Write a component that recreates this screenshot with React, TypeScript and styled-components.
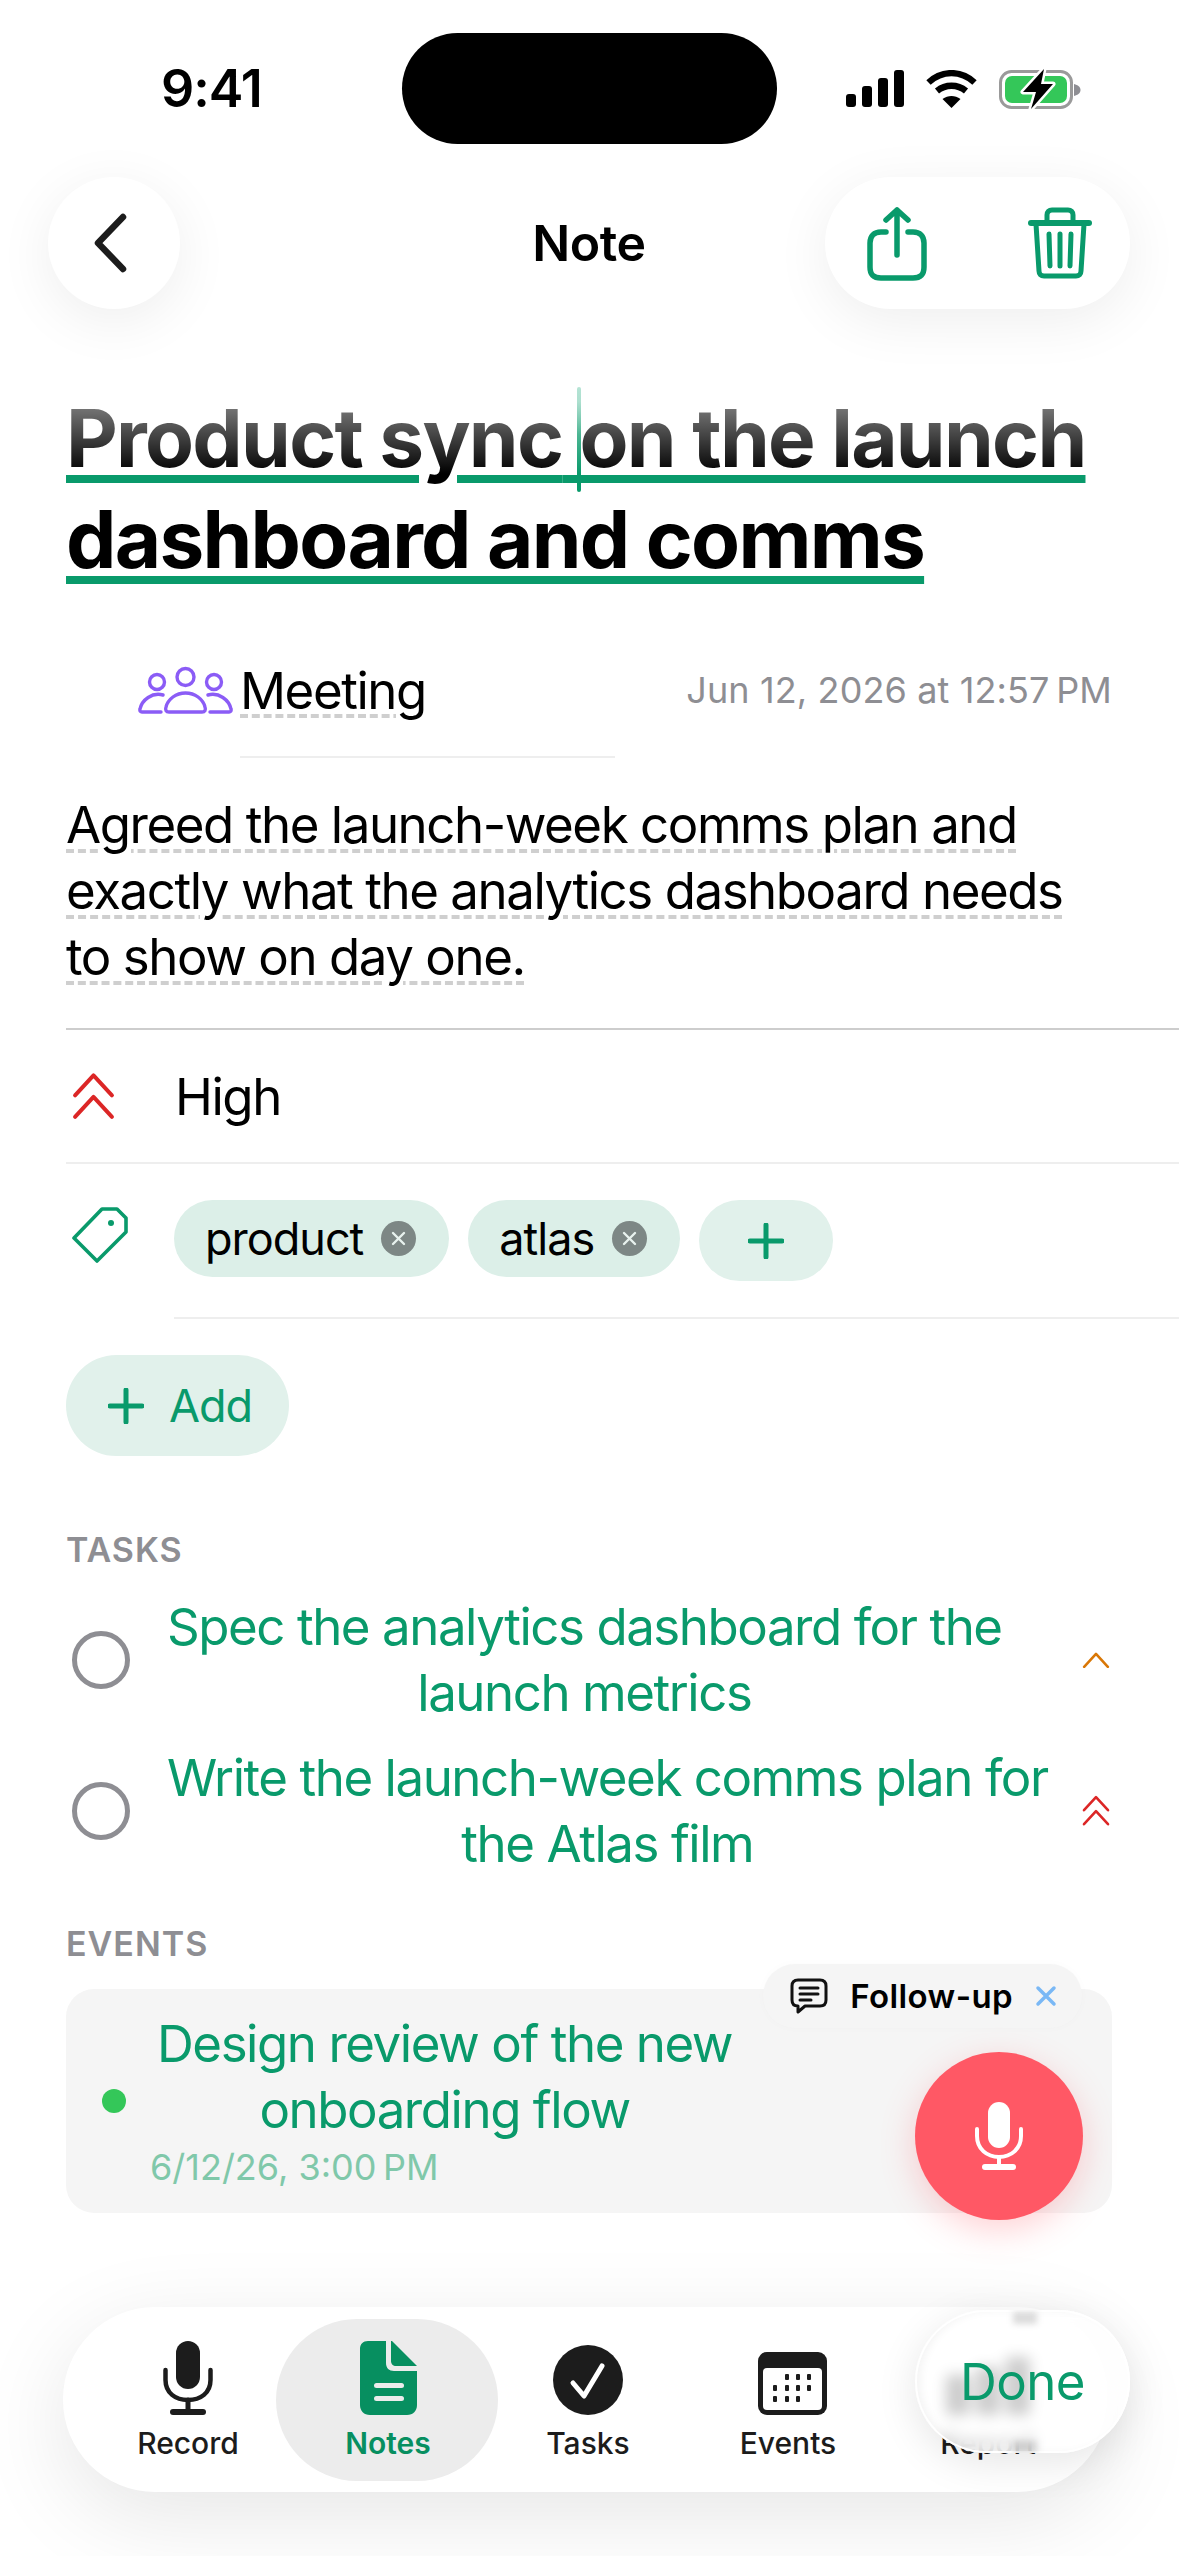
import React from 'react';
import styled, { createGlobalStyle } from 'styled-components';

const GREEN = '#099a6b';
const TAB_GREEN = '#078f60';
const INK = '#1c1c1c';

const GlobalStyle = createGlobalStyle`
  html, body {
    margin: 0;
    padding: 0;
    background: #fff;
  }
  body {
    font-family: Inter, "Noto Sans", sans-serif;
    color: #000;
    -webkit-font-smoothing: antialiased;
  }
`;

const Page = styled.div`
  position: relative;
  width: 1179px;
  height: 2556px;
  overflow: hidden;
  background: #fff;
`;

const StatusBar = styled.div`
  display: grid;
  grid-template-columns: 402px 375px 1fr;
  align-items: center;
  padding: 33px 0;
  height: 111px;
`;

const Time = styled.div`
  padding-left: 161px;
  font-size: 52px;
  font-weight: 600;
  letter-spacing: -1px;
`;

const Island = styled.div`
  height: 111px;
  border-radius: 56px;
  background: #000;
`;

const StatusIcons = styled.div`
  display: flex;
  align-items: center;
  gap: 22px;
  padding-left: 69px;
`;

const Header = styled.div`
  position: relative;
  z-index: 3;
  display: grid;
  grid-template-columns: 1fr auto 1fr;
  align-items: center;
  margin: 0 49px 0 48px;
  height: 132px;
`;

const BackButton = styled.div`
  display: flex;
  align-items: center;
  justify-content: center;
  width: 132px;
  height: 132px;
  border-radius: 50%;
  background: #fff;
  box-shadow: 0 12px 56px rgba(0, 0, 0, 0.07);

  svg {
    margin-right: 8px;
  }
`;

const HeaderTitle = styled.div`
  font-size: 50px;
  font-weight: 600;
  letter-spacing: -0.4px;
`;

const ActionPill = styled.div`
  justify-self: end;
  display: flex;
  align-items: center;
  gap: 101px;
  padding: 0 38px 0 42px;
  height: 132px;
  border-radius: 66px;
  background: #fff;
  box-shadow: 0 12px 56px rgba(0, 0, 0, 0.07);
`;

const TitleFade = styled.div`
  position: absolute;
  z-index: 2;
  left: 0;
  right: 0;
  top: 309px;
  height: 165px;
  pointer-events: none;
  background: linear-gradient(
    to bottom,
    rgba(255, 255, 255, 0) 0%,
    rgba(255, 255, 255, 0.5) 56%,
    rgba(255, 255, 255, 0) 100%
  );
`;

const Content = styled.div`
  padding-left: 66px;
`;

const Title = styled.h1`
  margin: 78px 67px 0 0;
  font-size: 80px;
  line-height: 101px;
  font-weight: 700;
  letter-spacing: -1.72px;
  white-space: nowrap;
  text-decoration: underline;
  text-decoration-color: ${GREEN};
  text-decoration-thickness: 8px;
  text-underline-offset: 8px;
`;

const CaretAnchor = styled.span`
  position: relative;
`;

const Caret = styled.span`
  position: absolute;
  left: -3px;
  top: -2px;
  width: 4px;
  height: 105px;
  border-radius: 2px;
  background: linear-gradient(to bottom, #7fd0b6, ${GREEN} 45%);
`;

const MetaRow = styled.div`
  display: flex;
  align-items: center;
  justify-content: space-between;
  margin-top: 68px;
  padding: 0 67px 0 72px;
  height: 66px;
`;

const MetaLeft = styled.div`
  display: flex;
  align-items: center;
  gap: 7px;
`;

const dashed = `
  text-decoration: underline dashed #cfcfcf;
  text-decoration-thickness: 4px;
  text-underline-offset: 6px;
`;

const MetaKind = styled.span`
  font-size: 51px;
  letter-spacing: -1.45px;
  ${dashed}
`;

const MetaDate = styled.span`
  font-size: 36px;
  color: #8e8e93;
  letter-spacing: 0.12px;
`;

const ShortRule = styled.div`
  margin: 33px 0 0 174px;
  width: 375px;
  height: 2px;
  background: #eeeeee;
`;

const Summary = styled.p`
  margin: 34px 0 0;
  font-size: 51px;
  line-height: 66px;
  letter-spacing: -1.45px;
  white-space: nowrap;
  ${dashed}
`;

const StrongRule = styled.div`
  margin-top: 38px;
  height: 2px;
  background: #cdcdcd;
`;

const PriorityRow = styled.div`
  display: flex;
  align-items: center;
  gap: 60px;
  padding-left: 6px;
  height: 132px;
  font-size: 51px;
  letter-spacing: -1.45px;
  border-bottom: 2px solid #eeeeee;
`;

const TagRow = styled.div`
  display: grid;
  grid-template-columns: 108px 1fr;
`;

const TagIcon = styled.div`
  padding: 43px 0 0 6px;
`;

const Chips = styled.div`
  display: flex;
  align-items: flex-start;
  gap: 19px;
  height: 117px;
  padding-top: 36px;
  border-bottom: 2px solid #eeeeee;
`;

const Chip = styled.div`
  display: flex;
  align-items: center;
  gap: 18px;
  height: 77px;
  padding: 0 33px 0 31px;
  border-radius: 39px;
  background: #dcefe8;
  font-size: 45px;
  letter-spacing: -1px;
`;

const ChipClose = styled.span`
  display: flex;
  align-items: center;
  justify-content: center;
  width: 35px;
  height: 35px;
  border-radius: 50%;
  background: #7d8785;
`;

const PlusChip = styled.div`
  display: flex;
  align-items: center;
  justify-content: center;
  width: 134px;
  height: 81px;
  border-radius: 41px;
  background: #e1f1eb;
`;

const AddButton = styled.div`
  display: flex;
  align-items: center;
  gap: 25px;
  margin-top: 36px;
  width: 223px;
  height: 101px;
  box-sizing: border-box;
  padding-left: 42px;
  border-radius: 51px;
  background: #e1f1eb;
  color: ${GREEN};
  font-size: 45px;
  font-weight: 400;
  letter-spacing: -1px;
`;

const SectionLabel = styled.div<{ $top: number }>`
  margin-top: ${(p) => p.$top}px;
  font-size: 34px;
  line-height: 40px;
  font-weight: 600;
  color: #8e8e93;
  letter-spacing: 1px;
`;

const TaskRow = styled.div<{ $top: number }>`
  display: flex;
  align-items: center;
  justify-content: space-between;
  margin-top: ${(p) => p.$top}px;
  padding: 0 69px 0 6px;
  height: 132px;

  svg {
    flex: none;
  }
`;

const TaskCheck = styled.span`
  flex: none;
  width: 58px;
  height: 58px;
  box-sizing: border-box;
  border: 5px solid #8e8e93;
  border-radius: 50%;
`;

const TaskText = styled.div`
  margin-left: 37px;
  margin-right: auto;
  font-size: 51px;
  line-height: 66px;
  letter-spacing: -1.45px;
  color: ${GREEN};
  text-align: center;
  white-space: nowrap;
`;

const EventCard = styled.div`
  position: relative;
  display: flex;
  align-items: center;
  gap: 24px;
  margin: 25px 67px 0 0;
  height: 224px;
  padding-left: 36px;
  border-radius: 28px;
  background: #f5f5f5;
`;

const EventDot = styled.span`
  flex: none;
  width: 24px;
  height: 24px;
  border-radius: 50%;
  background: #34c759;
`;

const EventBody = styled.div``;

const EventName = styled.div`
  margin-left: 7px;
  width: max-content;
  font-size: 51px;
  line-height: 66px;
  letter-spacing: -1.45px;
  color: ${GREEN};
  text-align: center;
`;

const EventWhen = styled.div`
  font-size: 36px;
  line-height: 48px;
  color: #80c8aa;
`;

const FollowUp = styled.div`
  position: absolute;
  top: -25px;
  right: 30px;
  display: flex;
  align-items: center;
  gap: 22px;
  height: 64px;
  box-sizing: border-box;
  padding: 0 25px 0 27px;
  border-radius: 32px;
  background: #f5f5f5;
  box-shadow: 0 0 10px rgba(0, 0, 0, 0.02);
  font-size: 33px;
  font-weight: 600;
  letter-spacing: 0.4px;
`;

const MicFab = styled.div`
  position: absolute;
  top: 63px;
  right: 29px;
  display: flex;
  align-items: center;
  justify-content: center;
  width: 168px;
  height: 168px;
  border-radius: 50%;
  background: #ff5865;
  box-shadow: 0 10px 34px rgba(255, 88, 101, 0.28);
`;

const TabBar = styled.div`
  position: absolute;
  left: 63px;
  top: 2307px;
  display: flex;
  width: 1046px;
  height: 185px;
  box-sizing: border-box;
  padding-left: 25px;
  border-radius: 92px;
  background: #fff;
  box-shadow: 0 24px 90px rgba(0, 0, 0, 0.1);
`;

const TabItem = styled.div<{ $active?: boolean }>`
  position: relative;
  flex: none;
  display: flex;
  flex-direction: column;
  align-items: center;
  width: 200px;
  height: 185px;
  color: ${(p) => (p.$active ? TAB_GREEN : INK)};
  font-size: 30px;
  font-weight: ${(p) => (p.$active ? 600 : 500)};

  ${(p) =>
    p.$active &&
    `
    &::before {
      content: '';
      position: absolute;
      left: -12px;
      top: 12px;
      width: 222px;
      height: 162px;
      border-radius: 81px;
      background: #ececec;
    }
  `}
`;

const TabIcon = styled.div<{ $nudge?: number }>`
  position: relative;
  display: flex;
  align-items: flex-end;
  justify-content: center;
  height: 108px;
  padding-left: ${(p) => p.$nudge ?? 0}px;
`;

const TabLabel = styled.div`
  position: relative;
  margin-top: 8px;
  line-height: 40px;
`;

const DoneGlass = styled.div`
  position: absolute;
  left: 915px;
  top: 2310px;
  display: flex;
  align-items: center;
  justify-content: center;
  width: 215px;
  height: 143px;
  border-radius: 72px;
  overflow: hidden;
  background: rgba(255, 255, 255, 0.78);
  backdrop-filter: blur(7px);
  box-shadow:
    0 10px 40px rgba(0, 0, 0, 0.1),
    inset 0 0 0 2px rgba(255, 255, 255, 0.95),
    inset 5px 0 10px rgba(0, 0, 0, 0.05);
  color: ${GREEN};
  font-size: 51px;
  letter-spacing: -0.6px;
`;

const GlassSmudge = styled.span<{ $top: number }>`
  position: absolute;
  left: 98px;
  top: ${(p) => p.$top}px;
  width: 24px;
  height: 12px;
  background: rgba(0, 0, 0, 0.14);
  filter: blur(3px);
`;

const ChevronUp = ({ size, color, double }: { size: number; color: string; double?: boolean }) => (
  <svg
    width={size}
    height={double ? size * 1.12 : size * 0.6}
    viewBox={double ? '0 0 28 31' : '0 0 28 17'}
    fill="none"
    stroke={color}
    strokeWidth={2.6}
    strokeLinecap="round"
    strokeLinejoin="round"
  >
    <path d="M2 15 14 2l12 13" />
    {double && <path d="M2 29 14 16l12 13" />}
  </svg>
);

const Plus = ({ size = 36 }: { size?: number }) => (
  <svg width={size} height={size} viewBox="0 0 36 36" fill="none" stroke={GREEN} strokeWidth={5} strokeLinecap="round">
    <path d="M18 2v32M2 18h32" />
  </svg>
);

const CloseX = () => (
  <svg width="15" height="15" viewBox="0 0 15 15" fill="none" stroke="#e8f2ee" strokeWidth={2.4} strokeLinecap="round">
    <path d="M2 2l11 11M13 2 2 13" />
  </svg>
);

const Tab = ({
  label,
  active,
  nudge,
  children,
}: {
  label: string;
  active?: boolean;
  nudge?: number;
  children: React.ReactNode;
}) => (
  <TabItem $active={active}>
    <TabIcon $nudge={nudge}>{children}</TabIcon>
    <TabLabel>{label}</TabLabel>
  </TabItem>
);

const App: React.FC = () => {
  return (
    <Page>
      <GlobalStyle />
      <StatusBar>
        <Time>9:41</Time>
        <Island />
        <StatusIcons>
          <svg width="58" height="37" viewBox="0 0 58 37" fill="#000">
            <rect x="0" y="24" width="10" height="13" rx="3" />
            <rect x="16" y="16" width="10" height="21" rx="3" />
            <rect x="32" y="8" width="10" height="29" rx="3" />
            <rect x="48" y="0" width="10" height="37" rx="3" />
          </svg>
          <svg width="51" height="38" viewBox="0 0 51 38" fill="none" stroke="#000" strokeWidth="6.4">
            <path d="M2.5 12.5C16 0 35 0 48.5 12.5" />
            <path d="M11 21c8.500-7 20.500-7 29 0" />
            <path d="M25.500 38 16.500 29c5.500-4 12.500-4 18 0z" fill="#000" stroke="none" />
          </svg>
          <svg width="83" height="42" viewBox="0 0 83 42" fill="none">
            <rect x="1.500" y="3.500" width="71" height="36" rx="11" stroke="#9a9a9a" strokeWidth="3" />
            <rect x="6" y="8" width="62" height="27" rx="7" fill="#34c759" />
            <path d="M75 16c4 1 6.500 3 6.500 6s-2.500 5-6.500 6z" fill="#8e8e93" />
            <path
              d="M45 1 24 24h13l-5 17 22-25H42z"
              fill="#000"
              stroke="#fff"
              strokeWidth="5"
              strokeLinejoin="round"
              paintOrder="stroke"
            />
          </svg>
        </StatusIcons>
      </StatusBar>

      <Header>
        <BackButton>
          <svg width="36" height="60" viewBox="0 0 36 60" fill="none" stroke={INK} strokeWidth="6.500" strokeLinecap="round" strokeLinejoin="round">
            <path d="M31 4 6 30l25 26" />
          </svg>
        </BackButton>
        <HeaderTitle>Note</HeaderTitle>
        <ActionPill>
          <svg width="60" height="76" viewBox="0 0 60 76" fill="none" stroke={GREEN} strokeWidth="5.500" strokeLinecap="round" strokeLinejoin="round">
            <path d="M19 27H14C7 27 3 31 3 38v24c0 8 4 11 11 11h32c7 0 11-3 11-11V38c0-7-4-11-11-11h-5" />
            <path d="M30 50V5M19 15 30 5l11 10" />
          </svg>
          <svg width="64" height="72" viewBox="0 0 64 72" fill="none" stroke={GREEN} strokeWidth="5" strokeLinecap="round" strokeLinejoin="round">
            <path d="M3 16h58" strokeWidth="6" />
            <path d="M19 15V8c0-3 2-5 5-5h16c3 0 5 2 5 5v7" />
            <path d="M8 17l3 47c0 3 2 5 5 5h32c3 0 5-2 5-5l3-47" />
            <path d="M21 27l1 32M32 27v32M43 27l-1 32" />
          </svg>
        </ActionPill>
      </Header>

      <TitleFade />

      <Content>
        <Title>
          Product sync{' '}
          <CaretAnchor>
            <Caret />
          </CaretAnchor>
          on the launch
          <br />
          dashboard and comms
        </Title>

        <MetaRow>
          <MetaLeft>
            <svg width="95" height="48" viewBox="0 0 95 48" fill="none" stroke="#8b5cf6" strokeWidth="3.400" strokeLinecap="round" strokeLinejoin="round">
              <circle cx="19" cy="16" r="7.500" />
              <circle cx="47.500" cy="11" r="8.500" />
              <circle cx="76" cy="16" r="7.500" />
              <path d="M25 29C14 26 4 34 2 43c-.5 2 .5 3 2 3h19" />
              <path d="M70 29c11-3 21 5 23 14 .5 2-.5 3-2 3H72" />
              <path d="M31 46h33c3 0 4-2 3-5-2-8-10-14-19.500-14S30 33 28 41c-1 3 0 5 3 5z" />
            </svg>
            <MetaKind>Meeting</MetaKind>
          </MetaLeft>
          <MetaDate>Jun 12, 2026 at 12:57{'\u202f'}PM</MetaDate>
        </MetaRow>
        <ShortRule />

        <Summary>
          Agreed the launch-week comms plan and
          <br />
          exactly what the analytics dashboard needs
          <br />
          to show on day one.
        </Summary>
        <StrongRule />

        <PriorityRow>
          <ChevronUp size={43} color="#dc2626" double />
          <span>High</span>
        </PriorityRow>

        <TagRow>
          <TagIcon>
            <svg width="56" height="56" viewBox="0 0 56 56" fill="none" stroke={GREEN} strokeWidth="3.600" strokeLinejoin="round">
              <path d="M30 2h15l9 9v14L25 54 2 31z" />
              <circle cx="39" cy="16" r="3" fill={GREEN} stroke="none" />
            </svg>
          </TagIcon>
          <Chips>
            <Chip>
              product
              <ChipClose>
                <CloseX />
              </ChipClose>
            </Chip>
            <Chip>
              atlas
              <ChipClose>
                <CloseX />
              </ChipClose>
            </Chip>
            <PlusChip>
              <Plus />
            </PlusChip>
          </Chips>
        </TagRow>

        <AddButton>
          <Plus />
          Add
        </AddButton>

        <SectionLabel $top={74}>TASKS</SectionLabel>
        <TaskRow $top={24}>
          <TaskCheck />
          <TaskText>
            Spec the analytics dashboard for the
            <br />
            launch metrics
          </TaskText>
          <ChevronUp size={28} color="#d97706" />
        </TaskRow>
        <TaskRow $top={19}>
          <TaskCheck />
          <TaskText>
            Write the launch-week comms plan for
            <br />
            the Atlas film
          </TaskText>
          <ChevronUp size={28} color="#dc2626" double />
        </TaskRow>

        <SectionLabel $top={47}>EVENTS</SectionLabel>
        <EventCard>
          <EventDot />
          <EventBody>
            <EventName>
              Design review of the new
              <br />
              onboarding flow
            </EventName>
            <EventWhen>6/12/26, 3:00{'\u202f'}PM</EventWhen>
          </EventBody>
          <FollowUp>
            <svg width="38" height="36" viewBox="0 0 38 36" fill="none" stroke="#111" strokeWidth="3" strokeLinecap="round" strokeLinejoin="round">
              <path d="M8 2h22c4 0 6 2 6 6v14c0 4-2 6-6 6H15l-7 6v-6c-4 0-6-2-6-6V8c0-4 2-6 6-6z" />
              <path d="M10 10h18M10 16h18M10 22h11" />
            </svg>
            <span>Follow-up</span>
            <svg width="22" height="22" viewBox="0 0 22 22" fill="none" stroke="#7ab8f5" strokeWidth="3.500" strokeLinecap="round">
              <path d="M3 3l16 16M19 3 3 19" />
            </svg>
          </FollowUp>
          <MicFab>
            <svg width="48" height="70" viewBox="0 0 48 70" fill="none" stroke="#fff" strokeWidth="4" strokeLinecap="round">
              <rect x="13" y="1" width="22" height="46" rx="11" fill="#fff" stroke="none" />
              <path d="M2 28v7c0 13 10 21 22 21s22-8 22-21v-7" />
              <path d="M24 56v10" />
              <path d="M10 66h28" strokeWidth="6" />
            </svg>
          </MicFab>
        </EventCard>
      </Content>

      <TabBar>
        <Tab label="Record">
          <svg width="50" height="74" viewBox="0 0 50 74" fill="none" stroke={INK} strokeLinecap="round">
            <rect x="13" y="0" width="24" height="48" rx="12" fill={INK} stroke="none" />
            <path d="M2.500 29v10c0 13 10 20 22.500 20s22.500-7 22.500-20V29" strokeWidth="4.500" />
            <path d="M25 59v11" strokeWidth="5" />
            <path d="M10 71h30" strokeWidth="6" />
          </svg>
        </Tab>
        <Tab label="Notes" active>
          <svg width="57" height="74" viewBox="0 0 57 74" fill={TAB_GREEN}>
            <path d="M8 0h18v22c0 5 3 8 8 8h23v34c0 6-4 10-10 10H10C4 74 0 70 0 64V8C0 3 3 0 8 0z" />
            <path d="M31 0h1l25 25H36c-3 0-5-2-5-5z" />
            <rect x="14" y="42" width="30" height="5" rx="2.500" fill="#ececec" />
            <rect x="14" y="55" width="30" height="5" rx="2.500" fill="#ececec" />
          </svg>
        </Tab>
        <Tab label="Tasks">
          <svg width="70" height="70" viewBox="0 0 70 70">
            <circle cx="35" cy="35" r="35" fill={INK} />
            <path d="M20 38l11 13 18-30" fill="none" stroke="#fff" strokeWidth="5" strokeLinecap="round" strokeLinejoin="round" />
          </svg>
        </Tab>
        <Tab label="Events" nudge={8}>
          <svg width="69" height="63" viewBox="0 0 69 63">
            <rect width="69" height="63" rx="9" fill={INK} />
            <rect x="5" y="16" width="59" height="42" rx="4" fill="#fff" />
            <g fill={INK}>
              <rect x="27" y="22" width="4" height="6" rx="1" />
              <rect x="38" y="22" width="4" height="6" rx="1" />
              <rect x="49" y="22" width="4" height="6" rx="1" />
              <rect x="15" y="33" width="4" height="6" rx="1" />
              <rect x="27" y="33" width="4" height="6" rx="1" />
              <rect x="38" y="33" width="4" height="6" rx="1" />
              <rect x="49" y="33" width="4" height="6" rx="1" />
              <rect x="15" y="44" width="4" height="6" rx="1" />
              <rect x="27" y="44" width="4" height="6" rx="1" />
              <rect x="38" y="44" width="4" height="6" rx="1" />
            </g>
          </svg>
        </Tab>
        <Tab label="Report">
          <svg width="84" height="58" viewBox="0 0 84 58" fill={INK}>
            <rect x="0" y="18" width="24" height="40" rx="3" />
            <rect x="30" y="10" width="24" height="48" rx="3" />
            <rect x="60" y="0" width="24" height="58" rx="3" />
          </svg>
        </Tab>
      </TabBar>

      <DoneGlass>
        <GlassSmudge $top={2} />
        <GlassSmudge $top={131} />
        Done
      </DoneGlass>
    </Page>
  );
};

export default App;
